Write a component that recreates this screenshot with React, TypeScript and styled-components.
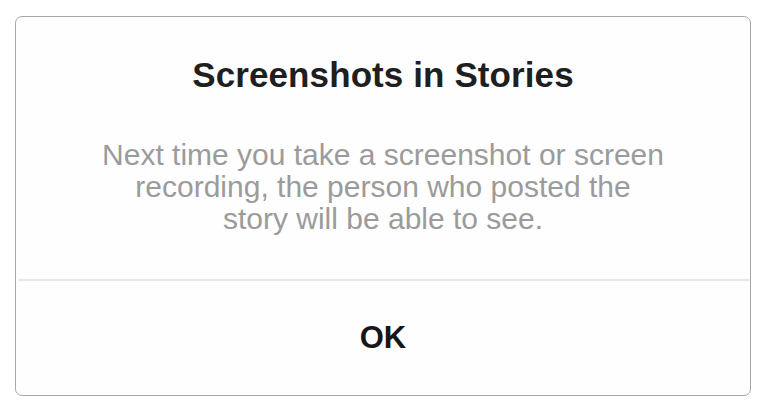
import React from 'react'
import styled, { createGlobalStyle } from 'styled-components'

const GlobalStyle = createGlobalStyle`
  html, body {
    margin: 0;
    padding: 0;
    background: #ffffff;
  }
  body {
    font-family: "Liberation Sans", Arial, sans-serif;
  }
`

const Page = styled.div`
  width: 768px;
  height: 412px;
  padding: 16px 17px 0 15px;
  box-sizing: border-box;
`

const Dialog = styled.div`
  width: 736px;
  height: 380px;
  box-sizing: border-box;
  border: 1px solid #a9a9a9;
  border-radius: 7px;
  background: #fefefe;
  display: flex;
  flex-direction: column;
  overflow: hidden;
`

const Body = styled.div`
  height: 262px;
  padding-top: 38px;
  box-sizing: border-box;
  display: flex;
  flex-direction: column;
  align-items: center;
  text-align: center;
`

const Title = styled.h1`
  margin: 0;
  font-size: 35px;
  line-height: 40px;
  font-weight: 700;
  color: #1f1f1f;
  letter-spacing: 0.1px;
`

const Message = styled.p`
  margin: 44px 0 0;
  font-size: 30px;
  line-height: 32px;
  font-weight: 400;
  color: #9b9b9b;
`

const Divider = styled.hr`
  margin: 0 0 0 2px;
  border: 0;
  height: 2px;
  background: #e8e8e8;
`

const Button = styled.button`
  flex: 1;
  border: 0;
  background: transparent;
  display: flex;
  align-items: center;
  justify-content: center;
  font-family: "Liberation Sans", Arial, sans-serif;
  font-size: 31px;
  font-weight: 700;
  color: #161616;
  padding: 0;
  cursor: pointer;
`

const App: React.FC = () => {
  return (
    <Page>
      <GlobalStyle />
      <Dialog>
        <Body>
          <Title>Screenshots in Stories</Title>
          <Message>
            Next time you take a screenshot or screen
            <br />
            recording, the person who posted the
            <br />
            story will be able to see.
          </Message>
        </Body>
        <Divider />
        <Button>OK</Button>
      </Dialog>
    </Page>
  )
}

export default App
